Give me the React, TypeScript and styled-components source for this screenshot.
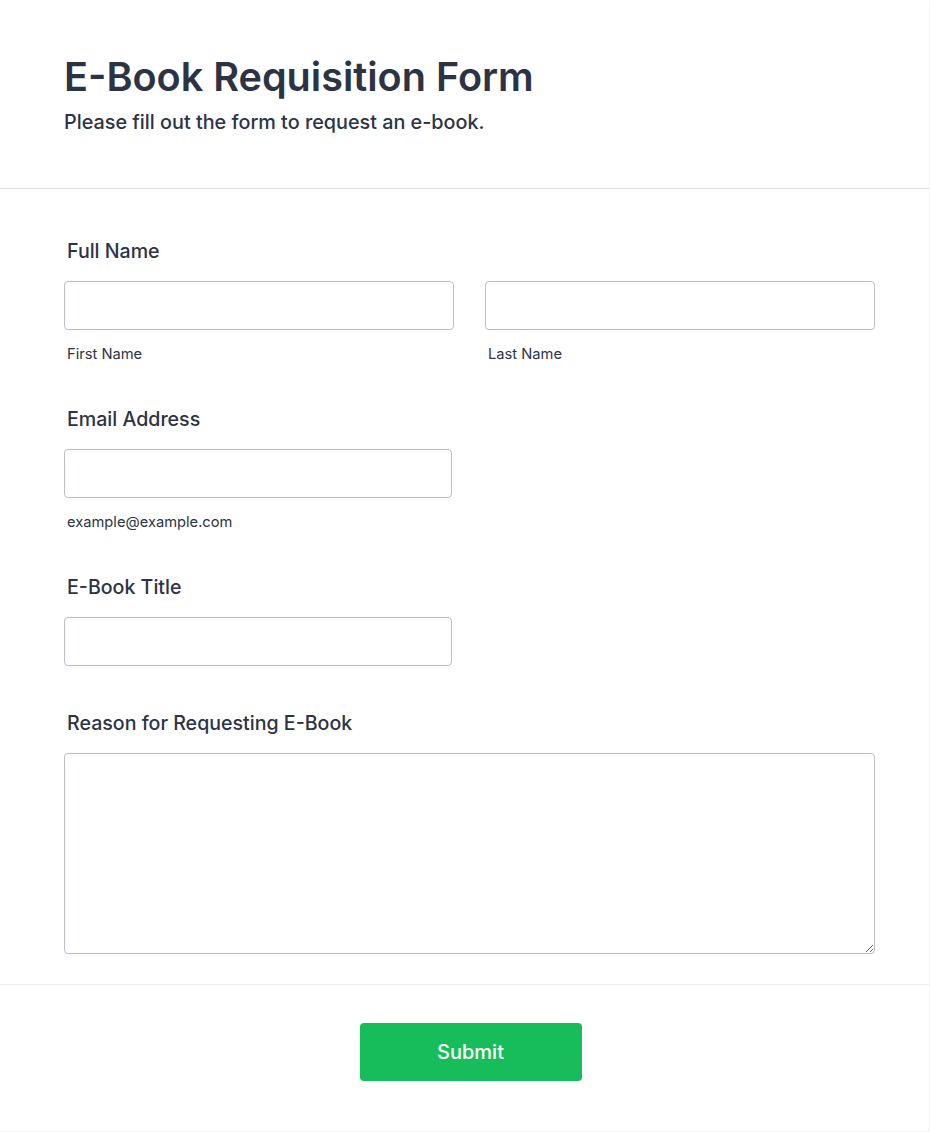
import styled, { createGlobalStyle } from 'styled-components'

const GlobalStyle = createGlobalStyle`
	* {
		box-sizing: border-box;
	}
	body {
		margin: 0;
		background: #ffffff;
		font-family: Inter, "Noto Sans", sans-serif;
		color: #2c3345;
	}
`

const Card = styled.div`
	width: 930px;
	min-height: 1132px;
	background: #ffffff;
	border-right: 1px solid #f1f1f6;
	border-bottom: 1px solid #f1f1f6;
	border-radius: 0 3px 3px 0;
`

const Header = styled.header`
	padding: 54px 64px 54px;
	border-bottom: 1px solid #dcdce8;
`

const Title = styled.h1`
	margin: 0;
	font-size: 39.6px;
	line-height: 46px;
	font-weight: 600;
`

const Subtitle = styled.p`
	margin: 10px 0 0;
	font-size: 19.8px;
	line-height: 24px;
	font-weight: 500;
`

const Body = styled.div`
	padding: 50px 55px 30px 64px;
	border-bottom: 1px solid #ececf2;
	display: flex;
	flex-direction: column;
`

const Field = styled.div<{ $gap: number }>`
	display: flex;
	flex-direction: column;
	margin-bottom: ${p => p.$gap}px;
	&:last-child {
		margin-bottom: 0;
	}
`

const Label = styled.label`
	display: block;
	padding-left: 3px;
	font-size: 19.6px;
	line-height: 24px;
	font-weight: 500;
	margin-bottom: 18px;
`

const Row = styled.div`
	display: grid;
	grid-template-columns: 390px 390px;
	column-gap: 31px;
`

const Column = styled.div`
	display: flex;
	flex-direction: column;
`

const Input = styled.input<{ $width?: number }>`
	width: ${p => (p.$width ? `${p.$width}px` : '100%')};
	height: 49px;
	border: 1px solid #b8bdc9;
	border-radius: 4px;
	padding: 0 12px;
	font-family: inherit;
	font-size: 16px;
	color: #2c3345;
	background: #ffffff;
	&:focus {
		outline: none;
		border-color: #2e69ff;
	}
`

const TextArea = styled.textarea`
	width: 811px;
	height: 201px;
	border: 1px solid #b8bdc9;
	border-radius: 4px;
	padding: 10px 12px;
	font-family: inherit;
	font-size: 16px;
	color: #2c3345;
	resize: vertical;
	&:focus {
		outline: none;
		border-color: #2e69ff;
	}
`

const SubLabel = styled.span`
	display: block;
	padding-left: 3px;
	margin-top: 13px;
	font-size: 14.7px;
	line-height: 22px;
	color: #2c3345;
`

const Footer = styled.div`
	display: flex;
	justify-content: center;
	padding: 38px 64px 50px 76px;
`

const Button = styled.button`
	width: 222px;
	height: 58px;
	border: none;
	border-radius: 4px;
	background: #18bd5b;
	color: #ffffff;
	font-family: inherit;
	font-size: 20px;
	font-weight: 500;
	cursor: pointer;
	&:hover {
		background: #16aa52;
	}
`

export default function App() {
	return (
		<>
			<GlobalStyle />
			<Card>
				<Header>
					<Title>E-Book Requisition Form</Title>
					<Subtitle>Please fill out the form to request an e-book.</Subtitle>
				</Header>
				<Body>
					<Field $gap={42}>
						<Label>Full Name</Label>
						<Row>
							<Column>
								<Input />
								<SubLabel>First Name</SubLabel>
							</Column>
							<Column>
								<Input />
								<SubLabel>Last Name</SubLabel>
							</Column>
						</Row>
					</Field>
					<Field $gap={42}>
						<Label>Email Address</Label>
						<Input $width={388} type="email" />
						<SubLabel>example@example.com</SubLabel>
					</Field>
					<Field $gap={45}>
						<Label>E-Book Title</Label>
						<Input $width={388} />
					</Field>
					<Field $gap={0}>
						<Label>Reason for Requesting E-Book</Label>
						<TextArea />
					</Field>
				</Body>
				<Footer>
					<Button type="button">Submit</Button>
				</Footer>
			</Card>
		</>
	)
}
